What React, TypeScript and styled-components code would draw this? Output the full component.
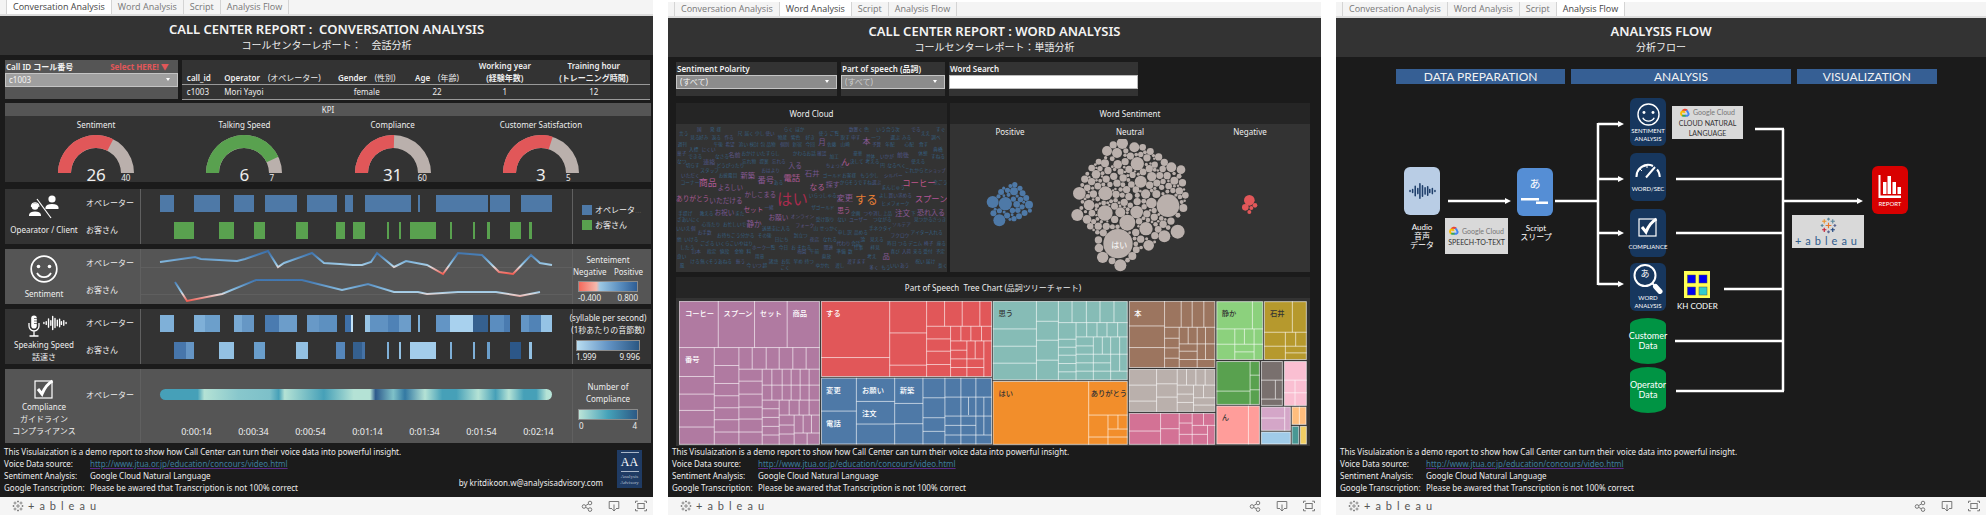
import React from "react";
import styled, { createGlobalStyle } from "styled-components";

const sans = `"Noto Sans", "Noto Sans CJK JP", sans-serif`;
const tabSans = `"Open Sans", sans-serif`;
const flowSans = `Lato, "Noto Sans CJK JP", sans-serif`;

const Global = createGlobalStyle`
  *, *::before, *::after { box-sizing: border-box; }
  body { margin: 0; background: #fff; font-family: ${sans}; color: #eee; font-size: 8px; line-height: 12px; }
  button, select, input { font-family: inherit; margin: 0; border-radius: 0; }
  svg { display: block; }
`;

/* ---------- page shell ---------- */

const Page = styled.main`
  display: grid;
  grid-template-columns: minmax(0, 653fr) minmax(0, 653fr) minmax(0, 650fr);
  gap: 15px;
  padding-bottom: 2px;
`;

const Dashboard = styled.section<{ $top: number }>`
  display: flex;
  flex-direction: column;
  padding-top: ${(p) => p.$top}px;
`;

const TabBar = styled.nav`
  display: flex;
  height: 16px;
  padding-left: 6px;
  background: #f4f4f4;
  border-bottom: 2px solid #dcdcdc;
`;

const Tab = styled.button<{ $active: boolean }>`
  height: 14px;
  padding: 0 6px;
  border: 0;
  border-right: 1px solid #d4d4d4;
  background: ${(p) => (p.$active ? "#fff" : "transparent")};
  color: ${(p) => (p.$active ? "#444" : "#777")};
  font-family: ${tabSans};
  font-size: 9px;
  line-height: 14px;
  &:first-child { border-left: 1px solid #d4d4d4; }
`;

const Board = styled.div`
  display: flex;
  flex: 1;
  flex-direction: column;
  background: #1b1b1b;
`;

const TitleBand = styled.header`
  height: 39px;
  padding-top: 4px;
  background: #333;
  text-align: center;
`;

const Title = styled.h1`
  margin: 0;
  color: #f4f4f4;
  font-size: 13px;
  line-height: 18px;
  font-weight: 600;
  white-space: pre;
`;

const Subtitle = styled.p`
  margin: 0;
  font-size: 10px;
  line-height: 15px;
  white-space: pre;
`;

const Notes = styled.footer`
  display: flex;
  align-items: flex-end;
  margin-top: auto;
  padding: 0 11px 3px 4px;
`;

const NoteLines = styled.div`
  flex: 1;
`;

const NoteLine = styled.p`
  display: flex;
  margin: 0;
  white-space: nowrap;
`;

const NoteKey = styled.span`
  flex: 0 0 86px;
`;

const Link = styled.a`
  color: #3d7c9c;
  text-decoration: underline;
  text-decoration-color: #5b2a86;
`;

const Author = styled.p`
  margin: 0 14px 5px 0;
`;

const Badge = styled.div`
  display: flex;
  flex-direction: column;
  align-items: center;
  width: 25px;
  height: 38px;
  margin-bottom: 6px;
  padding-top: 2px;
  background: #1f3b64;
  font-family: "Liberation Serif", serif;
`;

const BadgeMark = styled.span`
  width: 18px;
  border-top: 1px solid #a9b6c8;
  border-bottom: 1px solid #a9b6c8;
  color: #fff;
  font-size: 12px;
  line-height: 18px;
  text-align: center;
`;

const BadgeText = styled.span`
  margin-top: 2px;
  color: #b4bfce;
  font-size: 5px;
  line-height: 6px;
  text-align: center;
`;

const Toolbar = styled.div`
  display: flex;
  align-items: center;
  gap: 15px;
  height: 18px;
  padding: 0 6px 0 12px;
  background: #f5f5f5;
  color: #666;
`;

const Brand = styled.span`
  display: flex;
  flex: 1;
  align-items: center;
  gap: 4px;
`;

const Wordmark = styled.span<{ $color: string; $track: number }>`
  color: ${(p) => p.$color};
  font-family: ${flowSans};
  font-size: 11px;
  line-height: 12px;
  letter-spacing: ${(p) => p.$track}px;
`;

const ToolButton = styled.button`
  width: 12px;
  height: 12px;
  padding: 0;
  border: 0;
  background: none;
  color: #777;
`;

const CrossCluster = ({ size, colors }: { size: number; colors: string[] }) => {
  const spots = [
    [12, 12, 4], [12, 3, 2], [12, 21, 2], [3, 12, 2], [21, 12, 2],
    [6, 6, 3], [18, 6, 3], [6, 18, 3], [18, 18, 3],
  ];
  return (
    <svg width={size} height={size} viewBox="0 0 24 24" aria-hidden="true">
      {spots.map(([x, y, r], i) => (
        <path key={i} d={`M${x - r} ${y}h${r * 2}M${x} ${y - r}v${r * 2}`} stroke={colors[i % colors.length]} strokeWidth="1.6" />
      ))}
    </svg>
  );
};

const tabs = ["Conversation Analysis", "Word Analysis", "Script", "Analysis Flow"];

type FrameProps = {
  active: string;
  title: string;
  subtitle: string;
  top: number;
  signed?: boolean;
  children: React.ReactNode;
};

const Frame = ({ active, title, subtitle, top, signed, children }: FrameProps) => (
  <Dashboard $top={top}>
    <TabBar>
      {tabs.map((t) => (
        <Tab key={t} type="button" $active={t === active}>{t}</Tab>
      ))}
    </TabBar>
    <Board>
      <TitleBand>
        <Title>{title}</Title>
        <Subtitle>{subtitle}</Subtitle>
      </TitleBand>
      {children}
      <Notes>
        <NoteLines>
          <NoteLine>This Visulaization is a demo report to show how Call Center can turn their voice data into powerful insight.</NoteLine>
          <NoteLine><NoteKey>Voice Data source:</NoteKey><Link href="http://www.jtua.or.jp/education/concours/video.html">http://www.jtua.or.jp/education/concours/video.html</Link></NoteLine>
          <NoteLine><NoteKey>Sentiment Analysis:</NoteKey><span>Google Cloud Natural Language</span></NoteLine>
          <NoteLine><NoteKey>Google Transcription:</NoteKey><span>Please be awared that Transcription is not 100% correct</span></NoteLine>
        </NoteLines>
        {signed && (
          <>
            <Author>by kritdikoon.w@analysisadvisory.com</Author>
            <Badge>
              <BadgeMark>AA</BadgeMark>
              <BadgeText>Analysis Advisory</BadgeText>
            </Badge>
          </>
        )}
      </Notes>
    </Board>
    <Toolbar>
      <Brand>
        <CrossCluster size={12} colors={["#777"]} />
        <Wordmark $color="#555" $track={5} aria-label="tableau">+ableau</Wordmark>
      </Brand>
      <ToolButton type="button" aria-label="Share">
        <svg width="12" height="12" viewBox="0 0 12 12" fill="none" stroke="currentColor">
          <circle cx="3" cy="6.5" r="1.8" /><circle cx="9" cy="3" r="1.8" /><circle cx="9" cy="9.6" r="1.8" />
          <path d="M4.6 5.6L7.4 4M4.6 7.3L7.4 8.8" />
        </svg>
      </ToolButton>
      <ToolButton type="button" aria-label="Download">
        <svg width="12" height="12" viewBox="0 0 12 12" fill="none" stroke="currentColor">
          <path d="M4 8.5H1.2V1.5H10.8V8.5H8M6 4.5V11M4.3 9.2L6 11L7.7 9.2" />
        </svg>
      </ToolButton>
      <ToolButton type="button" aria-label="Full screen">
        <svg width="12" height="12" viewBox="0 0 12 12" fill="none" stroke="currentColor">
          <path d="M0.5 3V1.2H2.8M9.2 1.2H11.5V3M11.5 9V10.8H9.2M2.8 10.8H0.5V9" /><rect x="2.8" y="3.5" width="6.4" height="5" />
        </svg>
      </ToolButton>
    </Toolbar>
  </Dashboard>
);

/* ---------- filters ---------- */

const FilterLabel = styled.label`
  display: flex;
  justify-content: space-between;
  padding: 0 9px 0 1px;
  color: #f2f2f2;
  line-height: 13px;
  font-weight: 600;
  white-space: nowrap;
`;

const Hint = styled.span`
  color: #e15759;
  font-weight: 700;
`;

const SelectWrap = styled.div`
  position: relative;
  &::after {
    content: "";
    position: absolute;
    right: 8px;
    top: 5px;
    border: 2px solid transparent;
    border-top: 3px solid #fff;
    border-bottom: 0;
  }
`;

const Select = styled.select<{ $bg: string; $dim?: boolean }>`
  display: block;
  appearance: none;
  width: 100%;
  height: 14px;
  padding: 0 3px;
  border: 1px solid #c4c4c4;
  background: ${(p) => p.$bg};
  color: ${(p) => (p.$dim ? "#cfcfcf" : "#f4f4f4")};
  font-size: 8px;
  line-height: 12px;
`;

const SearchInput = styled.input`
  display: block;
  width: 100%;
  height: 14px;
  padding: 0 3px;
  border: 1px solid #bbb;
  background: #fff;
  color: #333;
  font-size: 8px;
`;

/* ---------- conversation analysis ---------- */

const ConversationBody = styled.div`
  display: flex;
  flex-direction: column;
  gap: 4px;
  padding: 5px 2px 2px 5px;
`;

const CallRow = styled.div`
  display: flex;
  gap: 4px;
  height: 39px;
  margin-right: 1px;
`;

const CallFilter = styled.div`
  flex: 0 0 26.8%;
  background: #555;
`;

const CallTable = styled.table`
  flex: 1;
  width: 100%;
  height: 39px;
  border-collapse: collapse;
  table-layout: fixed;
  background: #333;
  color: #eee;
  font-size: 8px;
  line-height: 12px;
`;

const Col = styled.col<{ $share?: number }>`
  width: ${(p) => (p.$share ? `${p.$share}%` : "auto")};
`;

const HeadCell = styled.th<{ $left?: boolean }>`
  height: 24px;
  padding: 0 0 0 ${(p) => (p.$left ? 5 : 0)}px;
  border-bottom: 1px solid #999;
  text-align: ${(p) => (p.$left ? "left" : "center")};
  vertical-align: bottom;
  font-weight: 600;
  white-space: pre;
`;

const Reading = styled.span`
  margin-left: 8px;
  font-weight: 400;
`;

const DataCell = styled.td<{ $left?: boolean }>`
  height: 15px;
  padding: 0 0 0 ${(p) => (p.$left ? 5 : 0)}px;
  border-bottom: 1px solid #999;
  text-align: ${(p) => (p.$left ? "left" : "center")};
`;

const Kpi = styled.section`
  display: flex;
  flex-direction: column;
  height: 79px;
  margin-bottom: 3px;
  background: #333;
`;

const KpiHead = styled.h2`
  margin: 0;
  background: #555;
  font-size: 8px;
  line-height: 13px;
  font-weight: 400;
  text-align: center;
`;

const Gauges = styled.div`
  display: grid;
  grid-template-columns: repeat(4, 1fr);
  padding: 2px 36px 0 17px;
`;

const GaugeBox = styled.figure`
  position: relative;
  display: flex;
  flex-direction: column;
  align-items: center;
  margin: 0;
`;

const GaugeLabel = styled.figcaption`
  margin-bottom: 4px;
  line-height: 13px;
`;

const GaugeValue = styled.span`
  position: absolute;
  top: 48px;
  left: 50%;
  transform: translateX(-50%);
  font-size: 17px;
  line-height: 18px;
`;

const GaugeMax = styled.span`
  position: absolute;
  top: 55px;
  left: calc(50% + 25px);
  line-height: 10px;
`;

const Gauge = ({ label, value, max, share, color }: { label: string; value: number; max: number; share: number; color: string }) => {
  const a = Math.PI * (1 - share);
  const at = (r: number) => `${38 + r * Math.cos(a)} ${38 - r * Math.sin(a)}`;
  return (
    <GaugeBox>
      <GaugeLabel>{label}</GaugeLabel>
      <svg width="76" height="38" viewBox="0 0 76 38" aria-hidden="true">
        <path d="M0 38A38 38 0 0 1 76 38H63A25 25 0 0 0 13 38Z" fill="#bab0ac" />
        <path d={`M0 38A38 38 0 0 1 ${at(38)}L${at(25)}A25 25 0 0 0 13 38Z`} fill={color} />
      </svg>
      <GaugeValue>{value}</GaugeValue>
      <GaugeMax>{max}</GaugeMax>
    </GaugeBox>
  );
};

const Track = styled.section<{ $light?: boolean; $h: number }>`
  display: grid;
  grid-template-columns: 78px 58px minmax(0, 1fr) 79px;
  height: ${(p) => p.$h}px;
  margin-bottom: 1px;
  background: ${(p) => (p.$light ? "#555" : "#333")};
  &:last-child { margin-bottom: 0; }
`;

const TrackName = styled.div<{ $pad: number }>`
  display: flex;
  flex-direction: column;
  align-items: center;
  padding-top: ${(p) => p.$pad}px;
  text-align: center;
  white-space: nowrap;
`;

const Speakers = styled.div`
  display: flex;
  flex-direction: column;
  padding: 0 0 0 3px;
  border-right: 1px solid #606060;
  line-height: 27px;
  white-space: nowrap;
`;

const LegendCol = styled.div<{ $pad: number }>`
  display: flex;
  flex-direction: column;
  align-items: center;
  padding: ${(p) => p.$pad}px 8px 0 0;
  border-left: 1px solid #606060;
  white-space: nowrap;
`;

const Swatches = styled.ul`
  display: flex;
  flex-direction: column;
  gap: 3px;
  width: 100%;
  margin: 0;
  padding: 0 0 0 9px;
  list-style: none;
`;

const SwatchItem = styled.li<{ $color: string }>`
  display: flex;
  align-items: center;
  gap: 3px;
  &::before { content: ""; width: 10px; height: 10px; background: ${(p) => p.$color}; }
`;

const Faint = styled.span`
  color: #555;
`;

const Spread = styled.div<{ $w: number }>`
  display: flex;
  justify-content: space-between;
  width: ${(p) => p.$w}px;
`;

const Ramp = styled.div<{ $w: number; $stops: string }>`
  width: ${(p) => p.$w}px;
  height: 11px;
  border: 1px solid #8b8b8b;
  background: linear-gradient(to right, ${(p) => p.$stops});
`;

const TimelineCol = styled.div`
  display: flex;
  flex-direction: column;
  justify-content: space-between;
`;

const Ticks = styled.div`
  display: grid;
  grid-template-columns: repeat(7, 1fr);
  padding: 0 5px 5px 27px;
  font-size: 9px;
  line-height: 12px;
  text-align: center;
`;

type Seg = [number, number, string];
const B = "#4e79a7";
const G = "#59a14f";
const operatorTurns: Seg[] = [
  [160, 174, B], [194, 220, B], [234, 254, B], [265, 297, B], [307, 337, B], [345, 353, B],
  [365, 411, B], [418, 420, B], [436, 488, B], [490, 510, B], [521, 552, B],
];
const clientTurns: Seg[] = [
  [174, 194, G], [219, 234, G], [254, 265, G], [296, 308, G], [336, 345, G], [353, 365, G], [387, 389, G],
  [399, 401, G], [410, 436, G], [450, 452, G], [473, 475, G], [487, 490, G], [510, 521, G], [529, 532, G],
];
const operatorSpeed: Seg[] = [
  [160, 174, "#7fb0d8"], [194, 205, "#7fb0d8"], [205, 220, "#6c9fcb"], [234, 242, "#79aad4"], [242, 254, "#6697c5"],
  [265, 279, "#4a7bb0"], [279, 297, "#6c9dca"], [307, 319, "#6899c7"], [319, 337, "#5d90c0"], [345, 351, "#3f70a8"],
  [351, 353, "#c4e3f7"], [365, 370, "#98c5e6"], [370, 388, "#6092c2"], [388, 399, "#4f82b6"], [399, 411, "#6c9dca"],
  [418, 420, "#7fb0d8"], [436, 450, "#6395c5"], [450, 473, "#a8d1ee"], [473, 488, "#35608f"], [490, 504, "#5b8dbf"],
  [504, 510, "#4a7bb0"], [521, 529, "#6395c5"], [529, 541, "#5183b6"], [541, 552, "#95c3e5"],
];
const clientSpeed: Seg[] = [
  [174, 186, "#4776ab"], [186, 194, "#6595c4"], [219, 234, "#93c1e3"], [254, 265, "#6a9ecb"], [296, 308, "#93c1e3"],
  [336, 345, "#5586ba"], [353, 362, "#35608f"], [362, 365, "#4572a5"], [387, 389, "#7fb0d8"], [399, 401, "#93c1e3"],
  [410, 436, "#a3cdeb"], [450, 452, "#7fb0d8"], [473, 475, "#7fb0d8"], [487, 490, "#6a9ecb"], [510, 521, "#2c5788"],
  [529, 532, "#93c1e3"],
];

const GanttChart = ({ rows, h }: { rows: Seg[][]; h: number }) => (
  <svg width="100%" height={h} viewBox={`141 0 431 ${h}`} preserveAspectRatio="none" role="img" aria-label="Speaking turns">
    {rows.map((row, r) =>
      row.map(([a, b, c], i) => <rect key={`${r}-${i}`} x={a} y={6 + r * 27} width={b - a} height="17" fill={c} />)
    )}
  </svg>
);

const moodOperator = "160,13 195,8 201,10 237,12 245,10 268,2 278,18 284,14 312,4 324,14 340,15 353,16 362,16 371,13 377,4 394,18 406,12 427,16 443,25 458,4 482,6 499,23 513,25 531,6 540,14 552,16";
const moodClient = "175,33 187,52 222,45 256,31 302,31 342,41 368,35 394,43 418,43 427,45 458,43 496,43 520,47 540,43";
const MoodChart = () => (
  <svg width="100%" height="55" viewBox="141 0 431 55" preserveAspectRatio="none" role="img" aria-label="Sentiment over time">
    <defs>
      {[0, 27].map((dy) => (
        <linearGradient key={dy} id={`mood${dy}`} gradientUnits="userSpaceOnUse" x1="0" x2="0" y1={2 + dy} y2={25 + dy}>
          <stop offset="0" stopColor="#3a6ea8" />
          <stop offset="0.2" stopColor="#4c82b9" />
          <stop offset="0.45" stopColor="#7db3db" />
          <stop offset="0.62" stopColor="#a5cde6" />
          <stop offset="0.7" stopColor="#e2d8d8" />
          <stop offset="1" stopColor="#f25b50" />
        </linearGradient>
      ))}
    </defs>
    <path d="M141 18.5H572M141 45.5H572" stroke="#5f5f5f" />
    <polyline points={moodOperator} fill="none" stroke="url(#mood0)" strokeWidth="2" />
    <polyline points={moodClient} fill="none" stroke="url(#mood27)" strokeWidth="2" />
  </svg>
);

const complianceStops: [number, string][] = [
  [0, "#46a0b8"], [9.6, "#46a0b8"], [11.3, "#b4e2d5"], [20, "#88c7cc"], [28, "#7dc0c9"], [30.3, "#46a0b8"], [31.8, "#b4e2d5"],
  [41.8, "#46a0b8"], [49.4, "#b4e2d5"], [53.6, "#b4e2d5"], [55, "#2d5a8c"], [59.5, "#7fc1c8"], [62.5, "#3379a3"],
  [67.6, "#b4e2d5"], [72, "#46a0b8"], [75.6, "#46a0b8"], [81.2, "#b4e2d5"], [85.6, "#46a0b8"], [89, "#b4e2d5"],
  [92.8, "#46a0b8"], [96, "#46a0b8"], [98.6, "#b4e2d5"], [100, "#b9e6da"],
];
const ComplianceChart = () => (
  <svg width="100%" height="40" viewBox="141 0 431 40" preserveAspectRatio="none" role="img" aria-label="Compliance over time">
    <defs>
      <linearGradient id="compliance">
        {complianceStops.map(([o, c], i) => <stop key={i} offset={`${o}%`} stopColor={c} />)}
      </linearGradient>
    </defs>
    <rect x="160" y="20" width="392" height="11" rx="5.5" fill="url(#compliance)" />
  </svg>
);

const Smiley = ({ size }: { size: number }) => (
  <svg width={size} height={size} viewBox="0 0 28 28" fill="none" stroke="#fff" strokeWidth="1.7" aria-hidden="true">
    <circle cx="14" cy="14" r="12.8" />
    <circle cx="8.5" cy="11.5" r="1.8" fill="#fff" stroke="none" />
    <circle cx="19.5" cy="11.5" r="1.8" fill="#fff" stroke="none" />
    <path d="M7 18C10 23.5 18 23.5 21 18" />
  </svg>
);

const CheckBoxIcon = ({ size }: { size: number }) => (
  <svg width={size} height={size} viewBox="0 0 20 20" fill="none" stroke="#fff" aria-hidden="true">
    <rect x="1" y="2" width="17" height="17" strokeWidth="1.2" />
    <path d="M4 10L8 15C10 10 13 5 18.5 2" strokeWidth="3" />
  </svg>
);

const TwoPeople = () => (
  <svg width="30" height="24" viewBox="0 0 30 24" fill="#fff" aria-hidden="true">
    <circle cx="23" cy="4" r="3.6" />
    <path d="M16.5 14V12Q17.500 9 23 9T29.500 12V14Z" />
    <circle cx="6" cy="11.5" r="3.3" />
    <path d="M2.5 12V10.500A3.800 3.800 0 0 1 9.800 10.500V12" fill="none" stroke="#fff" strokeWidth="1.2" />
    <path d="M0 21V19.500Q1 16.500 6 16.500T12 19.500V21Z" />
    <path d="M8 4L22 23" stroke="#fff" strokeWidth="1.2" />
  </svg>
);

const Wave = ({ w, h, color }: { w: number; h: number; color: string }) => (
  <svg width={w} height={h} viewBox="0 0 26 16" stroke={color} strokeWidth="1.5" strokeLinecap="round" aria-hidden="true">
    <path d="M1 7.5V8.5M3.500 6.500V9.500M6 3.500V12.500M8.500 5.500V10.500M10.500 1V15M13 3V13M15.500 5V11M18 4V12M20 6.500V9.500M22.500 5.500V10.500M25 7.500V8.500" />
  </svg>
);

const MicIcon = () => (
  <svg width="12" height="22" viewBox="0 0 12 22" fill="none" stroke="#fff" strokeWidth="1.3" aria-hidden="true">
    <rect x="3.2" y="0.5" width="5.600" height="13" rx="2.800" fill="#fff" stroke="none" />
    <path d="M1 8V11A5 5 0 0 0 11 11V8M6 16V21M1.500 21H10.500" />
    <path d="M6 3.500H9M6 6H9M6 8.500H9" stroke="#555" strokeWidth="0.8" />
  </svg>
);

const IconRow = styled.div`
  display: flex;
  gap: 3px;
  height: 24px;
  margin-left: 6px;
`;

const IconSlot = styled.div<{ $gap: number }>`
  margin-bottom: ${(p) => p.$gap}px;
`;

const ConversationAnalysis = () => (
  <Frame active="Conversation Analysis" title="CALL CENTER REPORT :  CONVERSATION ANALYSIS" subtitle="コールセンターレポート：　会話分析" top={0} signed>
    <ConversationBody>
      <CallRow>
        <CallFilter>
          <FilterLabel htmlFor="call-id">Call ID コール番号 <Hint>Select HERE! ▼</Hint></FilterLabel>
          <SelectWrap>
            <Select id="call-id" $bg="#9f9f9f"><option>c1003</option></Select>
          </SelectWrap>
        </CallFilter>
        <CallTable>
          <colgroup>
            <Col $share={8} /><Col $share={24} /><Col $share={15} /><Col $share={15} /><Col $share={14} /><Col />
          </colgroup>
          <thead>
            <tr>
              <HeadCell $left>call_id</HeadCell>
              <HeadCell $left>Operator<Reading>(オペレーター)</Reading></HeadCell>
              <HeadCell>Gender<Reading>(性別)</Reading></HeadCell>
              <HeadCell>Age<Reading>(年齢)</Reading></HeadCell>
              <HeadCell>{"Working year\n(経験年数)"}</HeadCell>
              <HeadCell>{"Training hour\n(トレーニング時間)"}</HeadCell>
            </tr>
          </thead>
          <tbody>
            <tr>
              <DataCell $left>c1003</DataCell>
              <DataCell $left>Mori Yayoi</DataCell>
              <DataCell>female</DataCell>
              <DataCell>22</DataCell>
              <DataCell>1</DataCell>
              <DataCell>12</DataCell>
            </tr>
          </tbody>
        </CallTable>
      </CallRow>
      <Kpi>
        <KpiHead>KPI</KpiHead>
        <Gauges>
          <Gauge label="Sentiment" value={26} max={40} share={0.65} color="#e15759" />
          <Gauge label="Talking Speed" value={6} max={7} share={0.86} color="#59a14f" />
          <Gauge label="Compliance" value={31} max={60} share={0.51} color="#e15759" />
          <Gauge label="Customer Satisfaction" value={3} max={5} share={0.6} color="#e15759" />
        </Gauges>
      </Kpi>
      <Track $h={55}>
        <TrackName $pad={6}>
          <IconSlot $gap={5}><TwoPeople /></IconSlot>
          Opearator / Client
        </TrackName>
        <Speakers><span>オペレーター</span><span>お客さん</span></Speakers>
        <GanttChart rows={[operatorTurns, clientTurns]} h={55} />
        <LegendCol $pad={15}>
          <Swatches>
            <SwatchItem $color={B}><span>オペレータ<Faint>…</Faint></span></SwatchItem>
            <SwatchItem $color={G}>お客さん</SwatchItem>
          </Swatches>
        </LegendCol>
      </Track>
      <Track $light $h={55}>
        <TrackName $pad={6}>
          <IconSlot $gap={5}><Smiley size={28} /></IconSlot>
          Sentiment
        </TrackName>
        <Speakers><span>オペレーター</span><span>お客さん</span></Speakers>
        <MoodChart />
        <LegendCol $pad={5}>
          <span>Senteiment</span>
          <Spread $w={70}><span>Negative</span><span>Positive</span></Spread>
          <IconSlot $gap={3} />
          <Ramp $w={60} $stops="#f4695c, #f5b8ac 30%, #9cc8e4 36%, #5b8fc0 70%, #2e5d94" />
          <Spread $w={60}><span>-0.400</span><span>0.800</span></Spread>
        </LegendCol>
      </Track>
      <Track $h={55}>
        <TrackName $pad={6}>
          <IconRow><MicIcon /><Wave w={24} h={16} color="#fff" /></IconRow>
          <span>Speaking Speed</span>
          <span>話速さ</span>
        </TrackName>
        <Speakers><span>オペレーター</span><span>お客さん</span></Speakers>
        <GanttChart rows={[operatorSpeed, clientSpeed]} h={55} />
        <LegendCol $pad={3}>
          <span>(syllable per second)</span>
          <span>(1秒あたりの音節数)</span>
          <IconSlot $gap={4} />
          <Ramp $w={64} $stops="#b9ddf1, #6394c5 50%, #2a5783" />
          <Spread $w={64}><span>1.999</span><span>9.996</span></Spread>
        </LegendCol>
      </Track>
      <Track $light $h={74}>
        <TrackName $pad={10}>
          <IconSlot $gap={2}><CheckBoxIcon size={20} /></IconSlot>
          <span>Compliance</span>
          <span>ガイドライン</span>
          <span>コンプライアンス</span>
        </TrackName>
        <Speakers><IconSlot $gap={12} /><span>オペレーター</span></Speakers>
        <TimelineCol>
          <ComplianceChart />
          <Ticks>
            {["0:00:14", "0:00:34", "0:00:54", "0:01:14", "0:01:34", "0:01:54", "0:02:14"].map((t) => <span key={t}>{t}</span>)}
          </Ticks>
        </TimelineCol>
        <LegendCol $pad={12}>
          <span>Number of</span>
          <span>Compliance</span>
          <IconSlot $gap={4} />
          <Ramp $w={60} $stops="#bce4d8, #45a2b9 50%, #2c5985" />
          <Spread $w={58}><span>0</span><span>4</span></Spread>
        </LegendCol>
      </Track>
    </ConversationBody>
  </Frame>
);

/* ---------- word analysis ---------- */

const WordBody = styled.div`
  display: flex;
  flex-direction: column;
  padding: 5px 11px 0 8px;
`;

const Filters = styled.div`
  display: grid;
  grid-template-columns: 161px 104px 189px;
  gap: 4px;
  margin-bottom: 7px;
`;

const FilterBox = styled.div`
  height: 34px;
  background: #333;
`;

const ChartPair = styled.div`
  display: grid;
  grid-template-columns: 271fr 360fr;
  gap: 3px;
  margin-bottom: 5px;
`;

const Card = styled.section<{ $h: number }>`
  display: flex;
  flex-direction: column;
  height: ${(p) => p.$h}px;
  background: #333;
`;

const CardTitle = styled.h2`
  margin: 0;
  background: #252525;
  font-size: 8px;
  line-height: 21px;
  font-weight: 400;
  text-align: center;
  white-space: pre;
`;

const CardHeads = styled.div`
  display: grid;
  grid-template-columns: repeat(3, 1fr);
  line-height: 15px;
  text-align: center;
`;

const TreeHolder = styled.div`
  padding: 3px 3px 0;
`;

/* word, x, y, size, colour */
type Word = [string, number, number, number, string];
const mid = "#885993";
const low = "#735690";
const hot = "#ad5a93";
const keyWords: Word[] = [
  ["はい", 350, 594, 46, "#a82c4e"], ["する", 583, 596, 34, "#e57e35"], ["コーヒー", 725, 547, 25, "#c0568c"], ["スプーン", 762, 593, 25, "#b25596"],
  ["商品", 115, 546, 27, hot], ["よろしい", 172, 561, 19, mid], ["ありがとう", 47, 594, 20, hot], ["いただける", 147, 599, 20, mid],
  ["かしこまる", 252, 582, 19, mid], ["番号", 291, 537, 25, mid], ["電話", 369, 531, 25, hot], ["新築", 240, 523, 22, mid], ["入る", 384, 494, 20, low],
  ["石井", 433, 517, 22, low], ["なる", 447, 559, 23, hot], ["探す", 496, 551, 21, low], ["変更", 528, 592, 25, mid], ["月", 473, 424, 23, low],
  ["本", 606, 421, 24, mid], ["ん", 542, 482, 25, hot], ["思う", 530, 630, 20, hot], ["注文", 703, 638, 23, mid], ["恐れ入る", 769, 634, 21, mid],
  ["セット", 249, 626, 20, hot], ["お祝い", 162, 635, 20, low], ["お願い", 324, 650, 20, mid], ["オンライン", 391, 646, 14, "#5c5585"], ["静か", 258, 670, 23, mid],
  ["フォーク", 405, 674, 14, "#5c5585"], ["品", 666, 765, 22, mid], ["名前", 204, 464, 18, "#5c5585"], ["連絡", 129, 485, 18, "#4f5482"], ["前後", 709, 463, 18, "#4f5482"], ["ショップ", 803, 508, 13, "#4f5482"],
];
const smallRows: [number, string][] = [
  [384, "110:国 149:発 168:様 370:らく 404:ほか 565:数置く 611:色 647:いう 676:合う 703:次 752:でる 826:すぐ"],
  [396, "56:言う 232:尺 252:届く 284:少し 315:使い 475:使う 508:ご覧 781:ええ"],
  [410, "90:見る 116:好み 154:返る 192:作る 352:物産 391:紫色 435:好き 540:取す 572:申す 632:一つ 690:選ぶ 724:みる 812:調べ"],
  [430, "52:週刊 160:午後 195:希望 235:追い 267:検討 300:包 318:品物 359:個別 396:新宿 435:今回 500:佐藤 540:山崎 634:予算 674:年配 732:心配 775:食す"],
  [444, "86:入標 124:にくい 818:典橋"],
  [457, "50:菓子 243:おかけ 288:いたすらし 397:かわる 438:お話 470:確認 578:豪華 773:休憩"],
  [467, "84:できる 164:なさる 507:加工 616:具体 658:いかが 811:すねる"],
  [482, "50:なつ 245:忘れ物 297:提案 334:忘れる 568:決して 615:考える 752:使える"],
  [494, "76:切らす 168:どうぴったり 496:ちょっと 659:円 680:なるべく"],
  [509, "120:スタッフ 303:おはより 733:これから 790:と"],
  [522, "62:いただく 175:お披露目 487:ゴールド 545:お客様 599:もう少し 670:シルバー"],
  [545, "61:コーナー 340:ある 538:から 564:そうですね 634:選ぶ 818:余ごう"],
  [560, "663:まんじゅう"],
  [582, "445:いらっしゃる 655:よし 684:買い求める"],
  [606, "663:ヒメフォーク"],
  [619, "312:一緒 452:ザゴールド"],
  [637, "54:手提げ 118:教える 224:また 572:企画 609:つや消し 667:上品 751:下"],
  [655, "50:ざあいにく 466:受け取り 530:ない 566:ユーザー 637:つながる 760:見つかる 815:さっき"],
  [670, "124:心当たり 188:お忙しいで 695:ソルテア"],
  [682, "48:いいえ 92:個 305:送感圭に入る 459:山 478:せっかく 625:手ネクタイ"],
  [694, "112:お手数 532:申し訳 580:品める 750:アイター 804:入れる"],
  [704, "170:お待ち 212:こう分かる 292:その後 400:到立つ 690:フクロウ"],
  [714, "50:他 72:いける 343:日にち 448:夜店 487:なれる 600:論 628:見える"],
  [726, "120:ござる 166:いくらこいやはり 528:代わり 572:会話 680:昨日 712:つる 743:デニム 790:椅子 828:座る"],
  [739, "60:したう 275:ホーク 317:一覧 355:今日 392:お 410:それる 490:関連 580:仕事 630:拝見"],
  [752, "94:山本 140:指定 178:値段 222:金物 258:料 410:梅園 448:午前 528:準備 562:数 690:喜び 724:入荷 757:来る 788:受付 825:予定"],
  [767, "50:良い 284:用意 484:直放 620:考え"],
  [780, "90:ける 120:無く 145:そうあねる 226:振う 325:諸語 362:お気 399:早め 432:持つ 560:渡すます 764:祝い 796:届け"],
  [792, "58:風 258:今 276:いつ 306:超 465:ゆかれ 524:渡し 688:いい 718:あう 832:長く"],
  [800, "360:こく 626:多く 662:もう"],
];
const cloudWords: Word[] = smallRows.flatMap(([y, row], r) =>
  row.split(" ").map((item, i): Word => {
    const [x, w] = item.split(":");
    return [w, Number(x), y, 14, (r + i) % 5 === 0 ? "#465886" : "#355f80"];
  })
);

const WordCloud = () => (
  <svg width="100%" height="148" viewBox="47 371 812 442" role="img" aria-label="Word cloud">
    {[...cloudWords, ...keyWords].map(([w, x, y, s, c], i) => (
      <text key={i} x={x} y={y} fontSize={s} fill={c} dominantBaseline="central">{w}</text>
    ))}
  </svg>
);

type Disc = [number, number, number];
const inside = (x: number, y: number, poly: number[][]) => {
  let hit = false;
  for (let i = 0, j = poly.length - 1; i < poly.length; j = i++) {
    const [xi, yi] = poly[i];
    const [xj, yj] = poly[j];
    if (yi > y !== yj > y && x < ((xj - xi) * (y - yi)) / (yj - yi) + xi) hit = !hit;
  }
  return hit;
};

/* Fills an outline with ever smaller discs around the fixed ones. */
const pack = (fixed: Disc[], poly: number[][], caps: number[]): Disc[] => {
  const out = [...fixed];
  let seed = 7;
  const rnd = () => (seed = (seed * 16807) % 2147483647) / 2147483647;
  const xs = poly.map((p) => p[0]);
  const ys = poly.map((p) => p[1]);
  const x0 = Math.min(...xs), y0 = Math.min(...ys);
  const w = Math.max(...xs) - x0, h = Math.max(...ys) - y0;
  caps.forEach((cap) => {
    for (let n = 0; n < 3500; n++) {
      const x = x0 + rnd() * w, y = y0 + rnd() * h;
      if (!inside(x, y, poly)) continue;
      let room = 99;
      for (const [cx, cy, r] of out) room = Math.min(room, Math.hypot(cx - x, cy - y) - r);
      if (room >= cap * 0.85) out.push([x, y, Math.min(room, cap)]);
    }
  });
  return out;
};

const neutral = pack(
  [
    [397, 428, 17], [351, 451, 15], [381, 457, 15], [433, 440, 15], [458, 440, 10], [442, 489, 20], [318, 521, 13], [346, 578, 21],
    [268, 578, 19], [262, 643, 18], [345, 637, 23], [297, 613, 16], [391, 635, 15], [440, 634, 19], [452, 543, 18], [485, 528, 14],
    [484, 607, 16], [534, 615, 34], [412, 666, 24], [468, 684, 20], [523, 707, 18], [563, 693, 21], [476, 734, 16], [384, 729, 44],
    [327, 742, 13], [338, 770, 17], [391, 794, 18], [427, 766, 12], [544, 500, 15], [573, 507, 13], [586, 584, 10], [580, 622, 12],
    [467, 580, 14], [499, 580, 12], [553, 540, 12], [536, 556, 10], [305, 502, 10], [326, 483, 9], [345, 488, 12], [383, 491, 13], [291, 656, 13],
  ],
  [[385, 420], [440, 430], [500, 458], [530, 475], [572, 500], [576, 540], [588, 584], [585, 625], [555, 655], [545, 685], [500, 728], [440, 750], [425, 770], [385, 800], [335, 780], [320, 735], [325, 710], [303, 680], [258, 650], [280, 610], [262, 580], [282, 535], [303, 495], [340, 478], [360, 440]],
  [11, 8, 6, 5, 4]
);
const positive = pack(
  [[8, 604, 18], [46, 609, 20], [28, 659, 18], [72, 572, 12], [117, 612, 12], [80, 611, 10]],
  [[35, 563], [75, 551], [92, 563], [120, 600], [120, 630], [88, 653], [45, 660], [10, 640], [-2, 600], [28, 580]],
  [9, 7, 5]
);
const negative: Disc[] = [[778, 599, 16], [766, 620, 10], [795, 614, 7], [778, 634, 6], [784, 622, 6]];

const Bubbles = () => (
  <svg width="100%" height="133" viewBox="-120 415 1080 399" role="img" aria-label="Word sentiment bubbles">
    {([[positive, "#4e79a7"], [neutral, "#bab0ac"], [negative, "#e15759"]] as [Disc[], string][]).map(([set, c]) => (
      <g key={c} fill={c}>{set.map(([x, y, r], i) => <circle key={i} cx={x} cy={y} r={r} />)}</g>
    ))}
    <text x="388" y="733" fontSize="24" fill="#fff" textAnchor="middle" dominantBaseline="central">はい</text>
  </svg>
);

/* Each block: colour, [x0, y0, x1, y1], vertical cuts "x:y0-y1", horizontal cuts "y:x0-x1" */
type Block = [string, number[], string, string];
const leftBlocks: Block[] = [
  ["#b07aa1", [57, 90, 480, 522],
    "175:90-230 284:90-230 382:90-230 163:230-522 237:230-522 277:230-295 319:230-295 358:230-295 399:230-295 439:230-295 307:295-522 336:295-388 367:295-388 394:295-388 421:295-388 448:295-388 358:388-522 388:388-433 418:388-433 448:388-433 403:433-522 430:433-487 455:433-487 442:487-522",
    "230:57-480 317:57-163 370:57-163 419:57-163 469:57-163 284:163-237 338:163-237 375:163-237 411:163-237 447:163-237 484:163-307 295:237-480 331:237-307 370:237-307 409:237-307 445:237-307 343:307-480 388:307-480 414:307-358 440:307-358 467:307-358 493:307-358 433:358-480 463:358-403 490:358-403 487:403-480"],
  ["#e15759", [484, 90, 997, 318],
    "690:90-318 801:90-318 855:90-166 908:90-166 961:90-166 873:166-318 904:166-210 934:166-210 966:166-210 922:210-318 947:210-264 973:210-318",
    "260:484-690 186:690-801 283:690-801 166:801-997 204:801-873 241:801-873 281:801-873 210:873-997 238:873-922 264:873-973 290:873-973"],
  ["#4e79a7", [484, 321, 997, 521],
    "590:321-521 705:321-521 790:321-521 856:321-521 904:321-521 949:321-521 927:379-433 973:379-493",
    "421:484-590 392:590-705 460:590-705 398:705-790 459:705-790 381:790-856 441:790-856 482:790-856 379:856-997 436:856-997 464:856-949 493:856-997"],
];
const rightBlocks: Block[] = [
  ["#86bcb6", [10, 90, 415, 328],
    "141:90-328 207:90-328 248:90-155 291:90-155 332:90-155 374:90-155 260:155-328 292:155-198 323:155-198 353:155-198 385:155-198 312:198-328 339:198-250 364:198-328 391:198-301",
    "174:10-141 226:10-141 277:10-141 151:141-207 208:141-207 268:141-207 155:207-415 205:207-260 229:207-260 253:207-260 278:207-260 303:207-260 198:260-415 225:260-312 250:260-415 276:260-364 301:260-415"],
  ["#f28e2b", [10, 331, 415, 522], "298:331-522 356:433-522 386:433-475", "433:298-415 475:356-415 499:298-415"],
  ["#9c755f", [419, 90, 678, 291],
    "526:90-291 576:90-169 609:90-169 644:90-169 570:169-291 597:169-219 624:169-291 649:169-266",
    "165:419-526 230:419-526 169:526-678 202:526-570 231:526-570 262:526-570 219:570-678 241:570-624 266:570-678"],
  ["#bab0ac", [419, 295, 678, 423],
    "502:295-423 564:295-423 592:295-343 620:295-343 648:295-343 613:343-423 643:343-381",
    "343:419-502 391:419-502 339:502-564 379:502-564 343:564-678 370:564-613 395:564-613 381:613-678 403:613-678"],
  ["#d37295", [419, 427, 678, 522], "514:427-522 570:427-522 609:427-522 643:427-464 655:464-522", "481:419-514 474:514-570 457:570-609 491:570-655 464:609-678"],
  ["#8cd17d", [682, 91, 822, 267], "790:91-174 737:174-267 766:174-220 795:174-267", "174:682-822 220:682-822 243:737-795"],
  ["#b6992d", [825, 91, 953, 267], "910:91-184 889:184-267 920:184-226", "184:825-953 226:825-953 246:889-953"],
  ["#59a14f", [682, 271, 812, 402], "783:271-402", "361:682-783 313:783-812 357:783-812"],
  ["#79706e", [816, 271, 881, 405], "859:328-385", "328:816-881 385:816-881"],
  ["#fabfd2", [885, 271, 953, 405], "918:328-405", "328:885-953 366:885-953"],
  ["#ff9d9a", [682, 405, 812, 521], "778:405-521", ""],
  ["#d4a6c8", [816, 408, 905, 480], "887:408-480", "442:816-887"],
  ["#a0cbe8", [816, 483, 905, 521], "", ""],
  ["#ffbe7d", [908, 408, 952, 462], "931:408-462", ""],
  ["#499894", [908, 466, 930, 521], "", ""],
  ["#f1ce63", [933, 466, 953, 521], "", ""],
];

const cuts = (v: string, h: string) => {
  const read = (s: string) => (s ? s.split(" ").map((c) => c.split(/[:-]/)) : []);
  return read(v).map(([x, a, b]) => `M${x} ${a}V${b}`).join("") + read(h).map(([y, a, b]) => `M${a} ${y}H${b}`).join("");
};

const TreeBlock = ({ block: [color, [x0, y0, x1, y1], v, h] }: { block: Block }) => (
  <g stroke="#fff" strokeOpacity="0.62" strokeWidth="3" fill="none">
    <rect x={x0 + 1} y={y0 + 1} width={x1 - x0 - 2} height={y1 - y0 - 2} fill={color} />
    <path d={cuts(v, h)} />
  </g>
);

const TreeText = ({ x, y, dark, children }: { x: number; y: number; dark?: boolean; children: string }) => (
  <text x={x} y={y} fontSize="22" fill={dark ? "#333" : "#fff"} fontWeight="500" dominantBaseline="central">{children}</text>
);

const TreeChart = () => (
  <svg width="100%" height="144" viewBox="57 90 1887 433" preserveAspectRatio="none" role="img" aria-label="Part of speech tree chart">
    {leftBlocks.map((b, i) => <TreeBlock key={i} block={b} />)}
    <TreeText x={75} y={127}>コーヒー</TreeText>
    <TreeText x={191} y={127}>スプーン</TreeText>
    <TreeText x={300} y={127}>セット</TreeText>
    <TreeText x={398} y={127}>商品</TreeText>
    <TreeText x={75} y={264}>番号</TreeText>
    <TreeText x={499} y={127}>する</TreeText>
    <TreeText x={499} y={357}>変更</TreeText>
    <TreeText x={499} y={456}>電話</TreeText>
    <TreeText x={607} y={357}>お願い</TreeText>
    <TreeText x={607} y={428}>注文</TreeText>
    <TreeText x={720} y={357}>新築</TreeText>
    <g transform="translate(990 0)">
      {rightBlocks.map((b, i) => <TreeBlock key={i} block={b} />)}
      <TreeText x={27} y={126} dark>思う</TreeText>
      <TreeText x={27} y={367} dark>はい</TreeText>
      <TreeText x={304} y={367} dark>ありがとう</TreeText>
      <TreeText x={435} y={126}>本</TreeText>
      <TreeText x={698} y={126} dark>静か</TreeText>
      <TreeText x={843} y={126} dark>石井</TreeText>
      <TreeText x={698} y={440} dark>ん</TreeText>
    </g>
  </svg>
);

const WordAnalysis = () => (
  <Frame active="Word Analysis" title="CALL CENTER REPORT : WORD ANALYSIS" subtitle="コールセンターレポート：単語分析" top={2}>
    <WordBody>
      <Filters>
        <FilterBox>
          <FilterLabel htmlFor="polarity">Sentiment Polarity</FilterLabel>
          <SelectWrap><Select id="polarity" $bg="#8c8c8c"><option>(すべて)</option></Select></SelectWrap>
        </FilterBox>
        <FilterBox>
          <FilterLabel htmlFor="speech">Part of speech (品詞)</FilterLabel>
          <SelectWrap><Select id="speech" $bg="#8c8c8c" $dim><option>(すべて)</option></Select></SelectWrap>
        </FilterBox>
        <FilterBox>
          <FilterLabel htmlFor="search">Word Search</FilterLabel>
          <SearchInput id="search" type="text" />
        </FilterBox>
      </Filters>
      <ChartPair>
        <Card $h={169}>
          <CardTitle>Word Cloud</CardTitle>
          <WordCloud />
        </Card>
        <Card $h={169}>
          <CardTitle>Word Sentiment</CardTitle>
          <CardHeads><span>Positive</span><span>Neutral</span><span>Negative</span></CardHeads>
          <Bubbles />
        </Card>
      </ChartPair>
      <Card $h={169}>
        <CardTitle>Part of Speech  Tree Chart (品詞ツリーチャート)</CardTitle>
        <TreeHolder><TreeChart /></TreeHolder>
      </Card>
    </WordBody>
  </Frame>
);

/* ---------- analysis flow ---------- */

const FlowBody = styled.div`
  width: 541px;
  max-width: 100%;
  margin: 12px auto 0;
  padding-left: 11px;
  box-sizing: content-box;
  font-family: ${flowSans};
`;

const Stages = styled.div`
  display: grid;
  grid-template-columns: 169fr 219fr 140fr;
  gap: 6px;
`;

const Stage = styled.h2`
  margin: 0;
  background: #365f94;
  color: #f2f2f2;
  font-size: 12px;
  line-height: 15px;
  font-weight: 400;
  text-align: center;
`;

const Canvas = styled.div`
  position: relative;
  height: 335px;
`;

const Wires = styled.svg`
  position: absolute;
  inset: 0;
`;

const Node = styled.div<{ $x: number; $y: number; $bg: string; $pad: number }>`
  position: absolute;
  left: ${(p) => p.$x}px;
  top: ${(p) => p.$y}px;
  display: flex;
  flex-direction: column;
  align-items: center;
  width: 36px;
  height: 48px;
  padding-top: ${(p) => p.$pad}px;
  border-radius: 6px;
  background: ${(p) => p.$bg};
  color: #fff;
  font-size: 6px;
  line-height: 8px;
  text-align: center;
`;

const Caption = styled.div<{ $x: number; $y: number; $w: number }>`
  position: absolute;
  left: ${(p) => p.$x}px;
  top: ${(p) => p.$y}px;
  width: ${(p) => p.$w}px;
  color: #fff;
  font-size: 8px;
  line-height: 9px;
  text-align: center;
  white-space: pre;
`;

const Plate = styled.div<{ $x: number; $y: number; $w: number; $h: number }>`
  position: absolute;
  left: ${(p) => p.$x}px;
  top: ${(p) => p.$y}px;
  display: flex;
  flex-direction: column;
  align-items: center;
  justify-content: center;
  gap: 1px;
  width: ${(p) => p.$w}px;
  height: ${(p) => p.$h}px;
  background: #d9d9d9;
  color: #333;
  font-size: 7px;
  line-height: 10px;
  text-align: center;
`;

const GoogleRow = styled.span`
  display: flex;
  align-items: center;
  gap: 3px;
  color: #777;
  white-space: nowrap;
`;

const Cylinder = styled.div<{ $y: number }>`
  position: absolute;
  left: 234px;
  top: ${(p) => p.$y}px;
  display: flex;
  align-items: center;
  justify-content: center;
  width: 36px;
  height: 46px;
  border-radius: 18px / 7px;
  background: #009444;
  color: #fff;
  font-size: 9px;
  line-height: 10px;
  text-align: center;
  white-space: pre;
`;

const ScriptGlyph = styled.span`
  font-size: 11px;
  line-height: 16px;
`;

const GoogleCloud = () => (
  <GoogleRow>
    <svg width="10" height="9" viewBox="0 0 20 17" fill="none" strokeWidth="4" aria-hidden="true">
      <path d="M5 6A5.500 5.500 0 0 1 14 4.500" stroke="#ea4335" />
      <path d="M13 4.500A6 6 0 0 1 16 9A3.400 3.400 0 0 1 15 14.800H10" stroke="#4285f4" />
      <path d="M11 14.800H5.500A4 4 0 0 1 4 14" stroke="#34a853" />
      <path d="M4.500 14.300A4.200 4.200 0 0 1 5 6.500Q8 6 9.500 9" stroke="#fbbc05" />
    </svg>
    <span>Google Cloud</span>
  </GoogleRow>
);

const AnalysisFlow = () => (
  <Frame active="Analysis Flow" title="ANALYSIS FLOW" subtitle="分析フロー" top={2}>
    <FlowBody>
      <Stages>
        <Stage>DATA PREPARATION</Stage>
        <Stage>ANALYSIS</Stage>
        <Stage>VISUALIZATION</Stage>
      </Stages>
      <Canvas>
        <Wires width="541" height="335" viewBox="0 0 541 335" fill="none" stroke="#fff" strokeWidth="2.5" aria-hidden="true">
          <path d="M52 117H110M159 117H202M202 40H224M202 95H224M202 149H224M202 200H224M202 39V201" />
          <path d="M359 45H388M280 95H387M280 149H387M328 205H387M279 257H387M280 307H388M387 45V307M387 117H462" />
          <path d="M109 114L115 117L109 120ZM222 37L228 40L222 43ZM222 92L228 95L222 98ZM222 146L228 149L222 152ZM222 197L228 200L222 203ZM461 114L467 117L461 120Z" fill="#fff" stroke="none" />
        </Wires>
        <Node $x={8} $y={83} $bg="#b9cde5" $pad={15}><Wave w={27} h={18} color="#1f3f6b" /></Node>
        <Caption $x={6} $y={139} $w={40}>{"Audio\n音声\nデータ"}</Caption>
        <Plate $x={49} $y={134} $w={63} $h={36}><GoogleCloud /><span>SPEECH-TO-TEXT</span></Plate>
        <Node $x={121} $y={84} $bg="#558ed5" $pad={8}>
          <ScriptGlyph>あ</ScriptGlyph>
          <svg width="28" height="12" viewBox="0 0 28 12" fill="#fff" aria-hidden="true"><path d="M0 6H18V8.500H0ZM15 9.500H27V12H15Z" /></svg>
        </Node>
        <Caption $x={120} $y={140} $w={40}>{"Script\nスリープ"}</Caption>

        <Node $x={234} $y={14} $bg="#17375e" $pad={5}>
          <IconSlot $gap={1}><Smiley size={23} /></IconSlot>
          <span>SENTIMENT</span><span>ANALYSIS</span>
        </Node>
        <Plate $x={276} $y={22} $w={71} $h={33}><GoogleCloud /><span>CLOUD NATURAL LANGUAGE</span></Plate>
        <Node $x={234} $y={69} $bg="#17375e" $pad={10}>
          <IconSlot $gap={6}>
            <svg width="26" height="16" viewBox="0 0 26 16" fill="none" stroke="#fff" aria-hidden="true">
              <path d="M1.500 14A11.500 11.500 0 0 1 18 3M22 6.500Q24.500 9 24.800 14" strokeWidth="2" />
              <path d="M1.500 14Q2.500 4.500 12 2.500" strokeWidth="1" />
              <path d="M11 14.500L20 4" strokeWidth="2" />
              <path d="M5 6L7 8M12 2V5" strokeWidth="1" />
            </svg>
          </IconSlot>
          <span>WORD/SEC</span>
        </Node>
        <Node $x={234} $y={125} $bg="#17375e" $pad={8}>
          <IconSlot $gap={6}><CheckBoxIcon size={20} /></IconSlot>
          <span>COMPLIANCE</span>
        </Node>
        <Node $x={234} $y={179} $bg="#17375e" $pad={1}>
          <svg width="32" height="30" viewBox="0 0 32 30" fill="none" stroke="#fff" aria-hidden="true">
            <circle cx="13" cy="11.5" r="10.5" strokeWidth="2" />
            <path d="M20 19L23 22" strokeWidth="2" />
            <path d="M23.500 22.500L28 27.500" strokeWidth="5" strokeLinecap="round" />
            <text x="13" y="13" fill="#fff" stroke="none" fontSize="9" textAnchor="middle">あ</text>
          </svg>
          <span>WORD</span><span>ANALYSIS</span>
        </Node>
        <Caption $x={281} $y={218} $w={40}>KH CODER</Caption>
        <Cylinder $y={234}>{"Customer\nData"}</Cylinder>
        <Cylinder $y={283}>{"Operator\nData"}</Cylinder>
        <Wires width="541" height="335" viewBox="0 0 541 335" aria-hidden="true">
          <rect x="288" y="187" width="26" height="27" fill="#ffff55" />
          <g stroke="#555" strokeWidth="0.5">
            <rect x="291.5" y="191" width="8" height="8" fill="#0000f0" /><rect x="303" y="191" width="8" height="8" fill="#0000f0" />
            <rect x="291.5" y="203" width="8" height="8" fill="#0000f0" /><rect x="303" y="203" width="8" height="8" fill="#33cccc" />
          </g>
        </Wires>

        <Plate $x={396} $y={131} $w={72} $h={33}>
          <CrossCluster size={17} colors={["#e8762b", "#5b879b", "#5b6591", "#5b879b", "#5b6591", "#eb912c", "#5b879b", "#c72035", "#1f447e"]} />
          <Wordmark $color="#2f5b8c" $track={4} aria-label="tableau">+ableau</Wordmark>
        </Plate>
        <Node $x={476} $y={82} $bg="#d80000" $pad={8}>
          <IconSlot $gap={2}>
            <svg width="24" height="24" viewBox="0 0 24 24" fill="#fff" aria-hidden="true">
              <path d="M0.500 1H2.500V21.500H23V24H0.500ZM5 8H8.500V20H5ZM9.500 2H13V20H9.500ZM14.500 8H18V20H14.500ZM19.500 13H23V20H19.500Z" />
            </svg>
          </IconSlot>
          <span>REPORT</span>
        </Node>
      </Canvas>
    </FlowBody>
  </Frame>
);

export default function App() {
  return (
    <>
      <Global />
      <Page>
        <ConversationAnalysis />
        <WordAnalysis />
        <AnalysisFlow />
      </Page>
    </>
  );
}
